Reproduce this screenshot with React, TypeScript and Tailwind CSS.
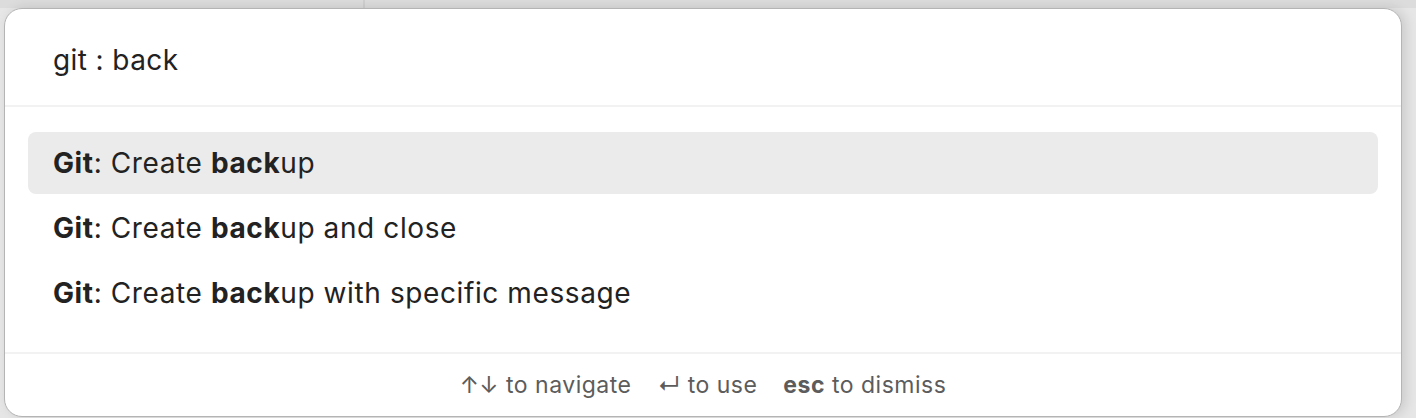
import React from "react";

function Row({ tail, selected }: { tail: string; selected?: boolean }) {
  return (
    <div
      className={
        "flex h-[62px] items-center rounded-[8px] px-[25px] text-[28px] tracking-[0.6px] text-[#222222] " +
        (selected ? "bg-[#ebebeb]" : "")
      }
    >
      <span className="font-bold">Git</span>
      <span>: Create&nbsp;</span>
      <span className="font-bold">back</span>
      <span>{"up" + tail}</span>
    </div>
  );
}

export default function App() {
  return (
    <div
      className="relative h-[418px] w-[1416px] overflow-hidden bg-[#e6e6e6]"
      style={{ fontFamily: "Inter, 'Noto Sans', sans-serif" }}
    >
      <div className="flex h-[8px] w-full bg-[#dcdcdc]">
        <div className="w-[365px] border-r-2 border-[#cfcfcf]" />
      </div>
      <div className="absolute left-[4px] top-[8px] flex h-[409px] w-[1398px] flex-col overflow-hidden rounded-[18px] border border-[#b4b4b4] bg-white shadow-[4px_0_12px_rgba(0,0,0,0.12)]">
        <div className="flex h-[98px] items-center border-b-2 border-[#f2f2f2] pl-[48px] pt-[6px] text-[28px] tracking-[0.4px] text-[#222222]">
          git : back
        </div>
        <div className="flex flex-col gap-[3px] px-[23px] pt-[25px]">
          <Row tail="" selected />
          <Row tail=" and close" />
          <Row tail=" with specific message" />
        </div>
        <div className="mt-auto flex h-[64px] items-center justify-center gap-[26px] border-t-2 border-[#f2f2f2] text-[23px] tracking-[0.5px] text-[#5c5c5c]">
          <span>↑↓ to navigate</span>
          <span>↵ to use</span>
          <span>
            <span className="font-bold">esc</span> to dismiss
          </span>
        </div>
      </div>
    </div>
  );
}
